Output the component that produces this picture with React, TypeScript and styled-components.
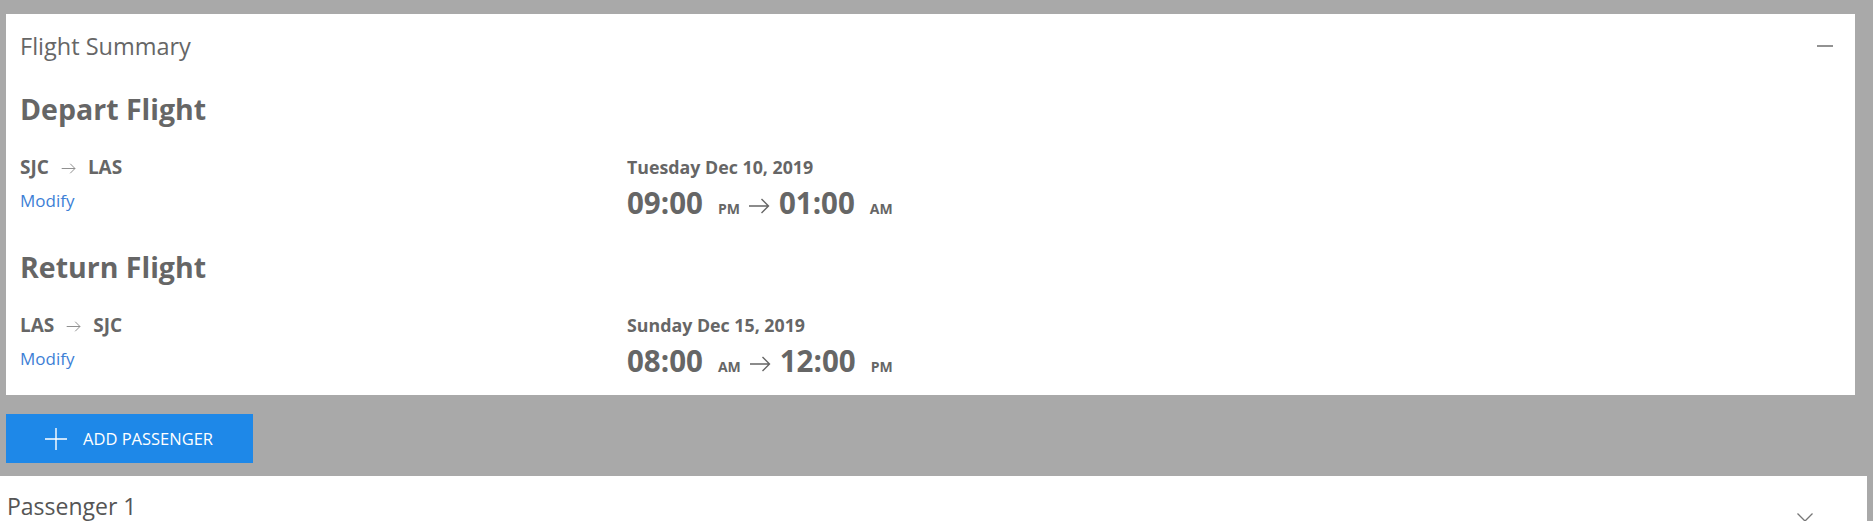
import styled, { createGlobalStyle } from 'styled-components';

const GlobalStyle = createGlobalStyle`
  html, body {
    margin: 0;
    padding: 0;
    background: #a9a9a9;
    font-family: "Open Sans", "Noto Sans", sans-serif;
    color: #666666;
  }
  * {
    box-sizing: border-box;
  }
`;

interface Flight {
  title: string;
  from: string;
  to: string;
  date: string;
  departTime: string;
  departPeriod: string;
  arriveTime: string;
  arrivePeriod: string;
}

const flights: Flight[] = [
  {
    title: 'Depart Flight',
    from: 'SJC',
    to: 'LAS',
    date: 'Tuesday Dec 10, 2019',
    departTime: '09:00',
    departPeriod: 'PM',
    arriveTime: '01:00',
    arrivePeriod: 'AM',
  },
  {
    title: 'Return Flight',
    from: 'LAS',
    to: 'SJC',
    date: 'Sunday Dec 15, 2019',
    departTime: '08:00',
    departPeriod: 'AM',
    arriveTime: '12:00',
    arrivePeriod: 'PM',
  },
];

const Arrow = ({ width, height, color }: { width: number; height: number; color: string }) => (
  <svg width={width} height={height} viewBox="0 0 22 16" fill="none">
    <path d="M1 8H20.5M13.5 1L20.5 8L13.5 15" stroke={color} strokeWidth="1.4" />
  </svg>
);

const FlightBlock = ({ flight }: { flight: Flight }) => (
  <Section>
    <SectionTitle>{flight.title}</SectionTitle>
    <FlightRow>
      <RouteColumn>
        <Route>
          <span>{flight.from}</span>
          <RouteArrow>
            <Arrow width={15} height={11} color="#8a8a8a" />
          </RouteArrow>
          <span>{flight.to}</span>
        </Route>
        <ModifyLink href="#">Modify</ModifyLink>
      </RouteColumn>
      <TimeColumn>
        <DateLine>{flight.date}</DateLine>
        <TimeLine>
          <Time>{flight.departTime}</Time>
          <Period>{flight.departPeriod}</Period>
          <TimeArrow>
            <Arrow width={22} height={16} color="#666666" />
          </TimeArrow>
          <Time>{flight.arriveTime}</Time>
          <Period>{flight.arrivePeriod}</Period>
        </TimeLine>
      </TimeColumn>
    </FlightRow>
  </Section>
);

export default function App() {
  return (
    <>
      <GlobalStyle />
      <Page>
        <SummaryCard>
          <CardHeader>
            <CardTitle>Flight Summary</CardTitle>
            <IconButton aria-label="collapse">
              <svg width="16" height="4" viewBox="0 0 16 4">
                <path d="M0 2H16" stroke="#777777" strokeWidth="1.6" />
              </svg>
            </IconButton>
          </CardHeader>
          {flights.map((f) => (
            <FlightBlock key={f.title} flight={f} />
          ))}
        </SummaryCard>
        <AddButton>
          <svg width="22" height="22" viewBox="0 0 22 22">
            <path d="M11 0V22M0 11H22" stroke="#ffffff" strokeWidth="1.4" />
          </svg>
          ADD PASSENGER
        </AddButton>
        <PassengerCard>
          <PassengerTitle>Passenger 1</PassengerTitle>
          <IconButton aria-label="expand">
            <svg width="16" height="9" viewBox="0 0 16 9" fill="none">
              <path d="M0.5 0.5L8 8L15.5 0.5" stroke="#777777" strokeWidth="1.3" />
            </svg>
          </IconButton>
        </PassengerCard>
      </Page>
    </>
  );
}

const Page = styled.div`
  padding-top: 14px;
  display: flex;
  flex-direction: column;
  align-items: flex-start;
`;

const SummaryCard = styled.div`
  align-self: stretch;
  margin: 0 18px 0 6px;
  background: #ffffff;
  padding: 16px 22px 16px 14px;
`;

const CardHeader = styled.div`
  display: flex;
  align-items: center;
  justify-content: space-between;
  height: 32px;
`;

const CardTitle = styled.div`
  font-size: 23.5px;
  line-height: 32px;
  font-weight: 400;
  color: #666666;
`;

const IconButton = styled.button`
  border: 0;
  background: none;
  padding: 0;
  display: flex;
  align-items: center;
  cursor: pointer;
`;

const Section = styled.div`
  margin-top: 29px;

  & + & {
    margin-top: 28px;
  }
`;

const SectionTitle = styled.h2`
  margin: 0;
  font-size: 28.5px;
  line-height: 36px;
  font-weight: 700;
  color: #666666;
`;

const FlightRow = styled.div`
  display: flex;
  margin-top: 28px;
`;

const RouteColumn = styled.div`
  width: 607px;
  display: flex;
  flex-direction: column;
  align-items: flex-start;
`;

const Route = styled.div`
  display: flex;
  align-items: center;
  gap: 12px;
  font-size: 19px;
  line-height: 24px;
  font-weight: 700;
  color: #666666;
`;

const RouteArrow = styled.span`
  display: flex;
  padding-top: 2px;
`;

const ModifyLink = styled.a`
  margin-top: 10px;
  font-size: 17px;
  line-height: 24px;
  color: #3d7fd6;
  text-decoration: none;
`;

const TimeColumn = styled.div`
  display: flex;
  flex-direction: column;
`;

const DateLine = styled.div`
  font-size: 17.8px;
  line-height: 24px;
  font-weight: 700;
  color: #666666;
`;

const TimeLine = styled.div`
  margin-top: 6px;
  display: flex;
  align-items: baseline;
  height: 36px;
`;

const Time = styled.span`
  font-size: 29.5px;
  line-height: 36px;
  font-weight: 700;
  color: #666666;
`;

const Period = styled.span`
  margin-left: 15px;
  font-size: 14px;
  font-weight: 700;
  color: #666666;
`;

const TimeArrow = styled.span`
  display: inline-flex;
  align-self: center;
  margin: 6px 9px 0 8px;
`;

const AddButton = styled.button`
  margin: 19px 0 0 6px;
  width: 247px;
  height: 49px;
  border: 0;
  background: #1e88e8;
  color: #ffffff;
  display: flex;
  align-items: center;
  gap: 16px;
  padding: 0 0 0 39px;
  font-family: inherit;
  font-size: 16.5px;
  font-weight: 400;
  cursor: pointer;
`;

const PassengerCard = styled.div`
  align-self: stretch;
  margin: 13px 6px 0 0;
  background: #ffffff;
  height: 60px;
  padding: 15px 54px 0 7px;
  display: flex;
  justify-content: space-between;
  align-items: flex-start;

  ${IconButton} {
    margin-top: 22px;
  }
`;

const PassengerTitle = styled.div`
  font-size: 23px;
  line-height: 30px;
  color: #555555;
`;
